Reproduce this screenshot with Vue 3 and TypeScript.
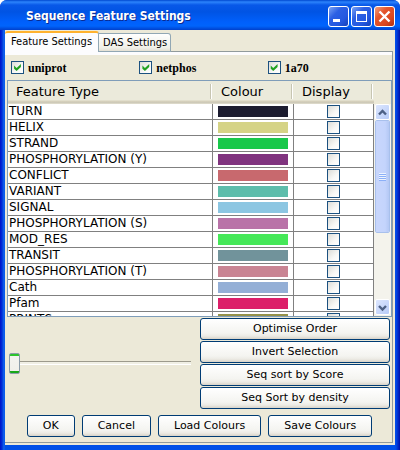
<script setup lang="ts">
import { ref } from 'vue'

interface Feature {
  type: string
  colour: string
  shown: boolean
}

const sources = ref([
  { name: 'uniprot', on: true },
  { name: 'netphos', on: true },
  { name: '1a70', on: true },
])

const features = ref<Feature[]>([
  { type: 'TURN', colour: '#1c1c30', shown: false },
  { type: 'HELIX', colour: '#d5d386', shown: false },
  { type: 'STRAND', colour: '#18c84a', shown: false },
  { type: 'PHOSPHORYLATION (Y)', colour: '#80347f', shown: false },
  { type: 'CONFLICT', colour: '#c8696e', shown: false },
  { type: 'VARIANT', colour: '#5dbdab', shown: false },
  { type: 'SIGNAL', colour: '#8cc6e2', shown: false },
  { type: 'PHOSPHORYLATION (S)', colour: '#b973a8', shown: false },
  { type: 'MOD_RES', colour: '#45e858', shown: false },
  { type: 'TRANSIT', colour: '#71939b', shown: false },
  { type: 'PHOSPHORYLATION (T)', colour: '#c98493', shown: false },
  { type: 'Cath', colour: '#94afd6', shown: false },
  { type: 'Pfam', colour: '#dc1f69', shown: false },
  { type: 'PRINTS', colour: '#95924a', shown: false },
])

const orderActions = ['Optimise Order', 'Invert Selection', 'Seq sort by Score', 'Seq Sort by density']
const dialogActions = ['OK', 'Cancel', 'Load Colours', 'Save Colours']
const transparency = ref(0)
const pane = ref<HTMLElement | null>(null)

function scrollRows(rows: number) {
  pane.value?.scrollBy({ top: rows * 16 })
}

function runOrder(action: string) {
  if (action === 'Invert Selection') {
    features.value.forEach((f) => (f.shown = !f.shown))
  }
}
</script>

<template>
  <main class="window">
    <header class="titlebar">
      <h1>Sequence Feature Settings</h1>
      <div class="controls">
        <button class="control" type="button" aria-label="Minimise">
          <svg viewBox="0 0 19 19"><rect x="4" y="12" width="7" height="3" fill="#fff" /></svg>
        </button>
        <button class="control" type="button" aria-label="Maximise">
          <svg viewBox="0 0 19 19">
            <path d="M4 4h11v11H4z M5 7v7h9V7z" fill="#fff" fill-rule="evenodd" />
          </svg>
        </button>
        <button class="control close" type="button" aria-label="Close">
          <svg viewBox="0 0 19 19"><path d="M4.500 4.500l10 10M14.500 4.500l-10 10" stroke="#fff" stroke-width="2.400" /></svg>
        </button>
      </div>
    </header>

    <div class="body">
      <nav class="tabs" role="tablist">
        <button class="tab active" type="button" role="tab" aria-selected="true">Feature Settings</button>
        <button class="tab" type="button" role="tab" aria-selected="false">DAS Settings</button>
        <span class="tabline"></span>
      </nav>

      <section class="panel">
        <div class="sources">
          <label v-for="s in sources" :key="s.name" class="source">
            <input v-model="s.on" class="check" type="checkbox" />
            <span>{{ s.name }}</span>
          </label>
        </div>

        <div class="list">
          <div ref="pane" class="pane">
            <table>
              <colgroup>
                <col />
                <col class="colour-col" />
                <col class="display-col" />
              </colgroup>
              <thead>
                <tr>
                  <th>Feature Type</th>
                  <th>Colour</th>
                  <th>Display</th>
                </tr>
              </thead>
              <tbody>
                <tr v-for="f in features" :key="f.type">
                  <td>{{ f.type }}</td>
                  <td><div class="swatch" :style="{ background: f.colour }"></div></td>
                  <td class="tick">
                    <input v-model="f.shown" class="check" type="checkbox" :aria-label="'Display ' + f.type" />
                  </td>
                </tr>
              </tbody>
            </table>
          </div>
          <div class="side">
            <div class="corner"></div>
            <div class="scrollbar">
              <button class="arrow" type="button" aria-label="Scroll up" @click="scrollRows(-1)">
                <svg viewBox="0 0 13 13"><path d="M3 8.500l3.500-3.500 3.500 3.500" /></svg>
              </button>
              <div class="thumb"><span class="grip"></span></div>
              <div class="trough"></div>
              <button class="arrow" type="button" aria-label="Scroll down" @click="scrollRows(1)">
                <svg viewBox="0 0 13 13"><path d="M3 5l3.500 3.500 3.500-3.500" /></svg>
              </button>
            </div>
          </div>
        </div>

        <div class="tools">
          <input v-model="transparency" class="slider" type="range" min="0" max="100" aria-label="Transparency" />
          <div class="orders">
            <button v-for="a in orderActions" :key="a" class="btn" type="button" @click="runOrder(a)">{{ a }}</button>
          </div>
        </div>

        <footer class="actions">
          <button v-for="a in dialogActions" :key="a" class="btn" type="button">{{ a }}</button>
        </footer>
      </section>
    </div>
  </main>
</template>

<style>
body {
  background: #fff;
}
</style>

<style scoped>
* {
  box-sizing: border-box;
}
button {
  margin: 0;
  padding: 0;
  font-family: inherit;
  color: #000;
}
.window {
  min-height: 100vh;
  display: flex;
  flex-direction: column;
  padding: 0 5px 5px;
  border-radius: 7px 7px 0 0;
  background: linear-gradient(90deg, #0010c8 0, #0030d8 2px, #1468ee 4px, #0050e8 5px, #0050e8 calc(100% - 5px), #0048e8 calc(100% - 4px), #0010a8 100%);
  font-family: "DejaVu Sans", sans-serif;
  color: #000;
}
.titlebar {
  height: 30px;
  margin: 0 -5px;
  padding: 2px 5px 0 26px;
  display: flex;
  align-items: center;
  justify-content: space-between;
  border-radius: 7px 7px 0 0;
  background: linear-gradient(#0048d0 0, #2c84fc 2px, #0858e8 5px, #0054e4 12px, #0060fc 22px, #0064fc 26px, #0040cc 30px);
}
h1 {
  margin: 0;
  font: bold 12px/16px "DejaVu Sans Condensed", "Open Sans", sans-serif;
  color: #fff;
  text-shadow: 1px 1px #0a2a90;
}
.controls {
  display: flex;
  gap: 2px;
}
.control {
  width: 21px;
  height: 21px;
  border: 1px solid #fff;
  border-radius: 3px;
  background: linear-gradient(135deg, #7ca4f4 0, #2c60e4 35%, #2458e0 70%, #1440b8 100%);
}
.control.close {
  background: linear-gradient(135deg, #f0a080 0, #e4552c 35%, #dc4820 70%, #b03010 100%);
}
.control svg {
  display: block;
  width: 19px;
  height: 19px;
}
.body {
  flex: 1;
  display: flex;
  flex-direction: column;
  padding: 1px 2px 2px 0;
  background: #ece9d8;
}
.tabs {
  display: flex;
  align-items: flex-end;
  height: 21px;
}
.tab {
  height: 19px;
  padding: 0 3px 0 4px;
  border: 1px solid #91a7b4;
  border-left: 0;
  border-radius: 0 3px 0 0;
  background: linear-gradient(#fff, #f0f0e8 80%, #e4e0d4);
  font: 11px/17px "DejaVu Sans Condensed", sans-serif;
}
.tab.active {
  height: 21px;
  padding: 0 6px 2px;
  border: 0;
  border-top: 2px solid #ffb22e;
  border-right: 1px solid #91a7b4;
  border-radius: 3px 3px 0 0;
  background: #fcfcfe;
}
.tabline {
  flex: 1;
  border-bottom: 1px solid #919b9c;
}
.panel {
  flex: 1;
  padding: 3px 0 5px 2px;
  border: 1px solid #919b9c;
  border-width: 0 1px 1px 0;
  background: linear-gradient(#fcfcfe 3px, transparent 3px);
}
.sources {
  height: 25px;
  display: grid;
  grid-template-columns: repeat(3, 1fr);
}
.source {
  display: flex;
  align-items: center;
  gap: 4px;
  padding-left: 4px;
  font: bold 12px/14px "Liberation Serif", serif;
}
.check {
  appearance: none;
  flex: none;
  display: block;
  width: 13px;
  height: 13px;
  margin: 0;
  border: 1px solid #1c5180;
  background: linear-gradient(135deg, #dcdcd7, #f8f8f6 60%, #fff);
}
.check:checked {
  display: grid;
  place-items: center;
}
.check:checked::after {
  content: "";
  width: 9px;
  height: 8px;
  background: #21a121;
  clip-path: polygon(12% 25%, 40% 55%, 88% 5%, 88% 43%, 40% 93%, 12% 65%);
}
.list {
  display: flex;
  height: 237px;
  border: 1px solid #7f9db9;
  background: #fff;
}
.pane {
  flex: 1;
  overflow: auto;
  scrollbar-width: none;
}
table {
  width: 100%;
  table-layout: fixed;
  border-collapse: separate;
  border-spacing: 0;
}
.colour-col {
  width: 81px;
}
.display-col {
  width: 80px;
}
th {
  position: sticky;
  top: 0;
  height: 23px;
  padding: 0 8px 2px;
  background: linear-gradient(90deg, transparent calc(100% - 3px), #c7c5b2 calc(100% - 3px), #c7c5b2 calc(100% - 2px), #fff calc(100% - 2px), #fff calc(100% - 1px), transparent calc(100% - 1px)) 0 3px / 100% 15px no-repeat,
    linear-gradient(#ebeadb 19px, #d8d2bd 20px, #cbc7b8 22px, #ece9d8 23px);
  font: 13px/20px "DejaVu Sans", sans-serif;
  text-align: left;
}
td {
  height: 16px;
  padding: 0;
  border: 1px solid #808080;
  border-width: 0 1px 1px 0;
  font-size: 12px;
  line-height: 15px;
  white-space: nowrap;
}
td:first-child {
  padding-left: 1px;
}
.swatch {
  height: 11px;
  margin: 0 5px;
}
.tick .check {
  margin: 0 auto;
}
.side {
  width: 17px;
  display: flex;
  flex-direction: column;
  background: #f4f3ec;
}
.corner {
  height: 23px;
  background: #ece9d8;
}
.scrollbar {
  flex: 1;
  display: flex;
  flex-direction: column;
  padding: 0 1px 1px;
}
.arrow {
  height: 16px;
  border: 1px solid #fff;
  border-radius: 2px;
  background: linear-gradient(135deg, #dce6fe, #b8ccf8);
}
.arrow svg {
  display: block;
  width: 13px;
  height: 13px;
  fill: none;
  stroke: #4d6185;
  stroke-width: 2.4;
}
.thumb {
  height: 113px;
  display: grid;
  place-items: center;
  border: 1px solid #fff;
  border-radius: 2px;
  outline: 1px solid #a8c0ec;
  outline-offset: -1px;
  background: linear-gradient(90deg, #c8d6fc, #c4d4fc 70%, #b4c8f4);
}
.grip {
  width: 7px;
  height: 8px;
  background: repeating-linear-gradient(#eef4fe 0 1px, #8cb0f8 1px 2px);
}
.trough {
  flex: 1;
}
.tools {
  display: flex;
  align-items: center;
  padding-top: 1px;
}
.slider {
  appearance: none;
  flex: 1;
  min-width: 0;
  height: 22px;
  margin: 0 9px 0 2px;
  background: linear-gradient(#9c9a8c 0 1px, #f0efe4 1px 3px, #fff 3px 4px) 0 8px / 100% 4px no-repeat;
}
.slider::-webkit-slider-thumb {
  appearance: none;
  width: 11px;
  height: 21px;
  border: 1px solid #8b9ca8;
  border-radius: 2px;
  background: linear-gradient(#2cc42c 2px, #f3f3ef 2px, #f0f0ea calc(100% - 2px), #18a818 calc(100% - 2px));
}
.orders {
  width: 50%;
  max-width: 190px;
  flex: none;
  display: flex;
  flex-direction: column;
  gap: 1px;
  margin-right: 2px;
}
.btn {
  height: 22px;
  padding: 0 15px;
  border: 1px solid #003c74;
  border-radius: 3px;
  background: linear-gradient(#fff, #f4f4f0 70%, #ecebe5 85%, #d8d3c8);
  font-size: 11px;
  line-height: 18px;
}
.actions {
  display: flex;
  justify-content: center;
  gap: 7px;
  padding-top: 6px;
}
</style>
